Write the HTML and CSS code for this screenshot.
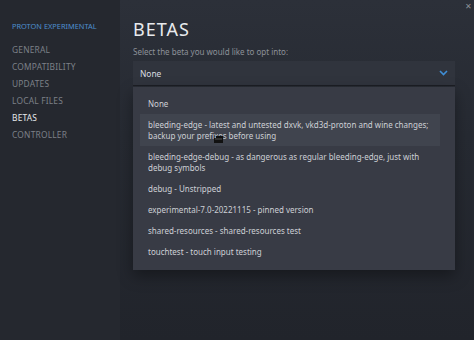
FILE: index.html
```html
<!DOCTYPE html>
<html lang="en">
<head>
  <meta charset="UTF-8">
  <title>Proton Experimental - Properties</title>
  <link rel="stylesheet" href="styles.css">
</head>
<body>
  <div class="window">
    <aside class="sidebar">
      <div class="game-title">PROTON EXPERIMENTAL</div>
      <ul class="nav">
        <li>GENERAL</li>
        <li>COMPATIBILITY</li>
        <li>UPDATES</li>
        <li>LOCAL FILES</li>
        <li class="active">BETAS</li>
        <li>CONTROLLER</li>
      </ul>
    </aside>
    <main class="content">
      <span class="close">&#x2715;</span>
      <h1>BETAS</h1>
      <p class="hint">Select the beta you would like to opt into:</p>
      <div class="select">
        <span>None</span>
        <svg class="chevron" width="9" height="6" viewBox="0 0 9 6">
          <path d="M1 1 L4.5 4.5 L8 1" fill="none" stroke="#3f8ed6" stroke-width="1.6"/>
        </svg>
      </div>
      <ul class="options">
        <li>None</li>
        <li class="hover">bleeding-edge - latest and untested dxvk, vkd3d-proton and wine changes; backup your prefixes before using
          <svg class="cursor" width="9" height="7" viewBox="0 0 9 7">
            <path d="M0 2 H2 V0 H9 V7 H0 Z" fill="#111"/>
            <path d="M1 3 H8" stroke="#555" stroke-width="1"/>
          </svg>
        </li>
        <li>bleeding-edge-debug - as dangerous as regular bleeding-edge, just with debug symbols</li>
        <li>debug - Unstripped</li>
        <li>experimental-7.0-20221115 - pinned version</li>
        <li>shared-resources - shared-resources test</li>
        <li>touchtest - touch input testing</li>
      </ul>
    </main>
  </div>
</body>
</html>
```

FILE: styles.css
```css
body {
  margin: 0;
  font-family: "Noto Sans", "Open Sans", sans-serif;
  background-color: #22252d;
  color: #c8ccd2;
}

.window {
  display: flex;
  width: 474px;
  height: 340px;
  overflow: hidden;
}

.sidebar {
  width: 120px;
  background-color: #25282f;
  padding-top: 21px;
  box-sizing: border-box;
}

.game-title {
  font-size: 7.4px;
  color: #4d8fd0;
  padding-left: 12px;
  margin-bottom: 10px;
}

.nav {
  list-style: none;
  margin: 0;
  padding: 0 0 0 12px;
}

.nav li {
  font-size: 8.4px;
  letter-spacing: 0.2px;
  line-height: 17px;
  color: #7c8088;
}

.nav li.active {
  color: #e6e8eb;
}

.content {
  position: relative;
  flex: 1;
  padding: 17px 19px 0 13px;
  background: linear-gradient(180deg, #2c3039 0%, #262a32 40%, #21242b 100%);
}

.close {
  position: absolute;
  top: 0;
  right: 2px;
  font-size: 8px;
  color: #8b8f96;
}

h1 {
  margin: 0;
  font-size: 18px;
  font-weight: 400;
  letter-spacing: 1px;
  color: #e8eaed;
  line-height: 24px;
}

.hint {
  margin: 4px 0 2px;
  font-size: 8px;
  line-height: 14px;
  color: #8d9199;
}

.select {
  display: flex;
  align-items: center;
  justify-content: space-between;
  height: 24px;
  padding: 0 7px;
  background-color: #30343d;
  border-bottom: 1px solid #1c1e24;
  font-size: 8.4px;
  color: #d9dce0;
}

.options {
  list-style: none;
  margin: 1px 0 0;
  padding: 6px 15px 8px 7px;
  background-color: #383b45;
  box-shadow: 0 6px 14px rgba(0, 0, 0, 0.35);
}

.options li {
  position: relative;
  padding: 5px 8px;
  font-size: 8px;
  line-height: 11px;
  color: #cdd0d5;
}

.options li.hover {
  background-color: #40444e;
}

.cursor {
  position: absolute;
  left: 74px;
  top: 22px;
}
```
